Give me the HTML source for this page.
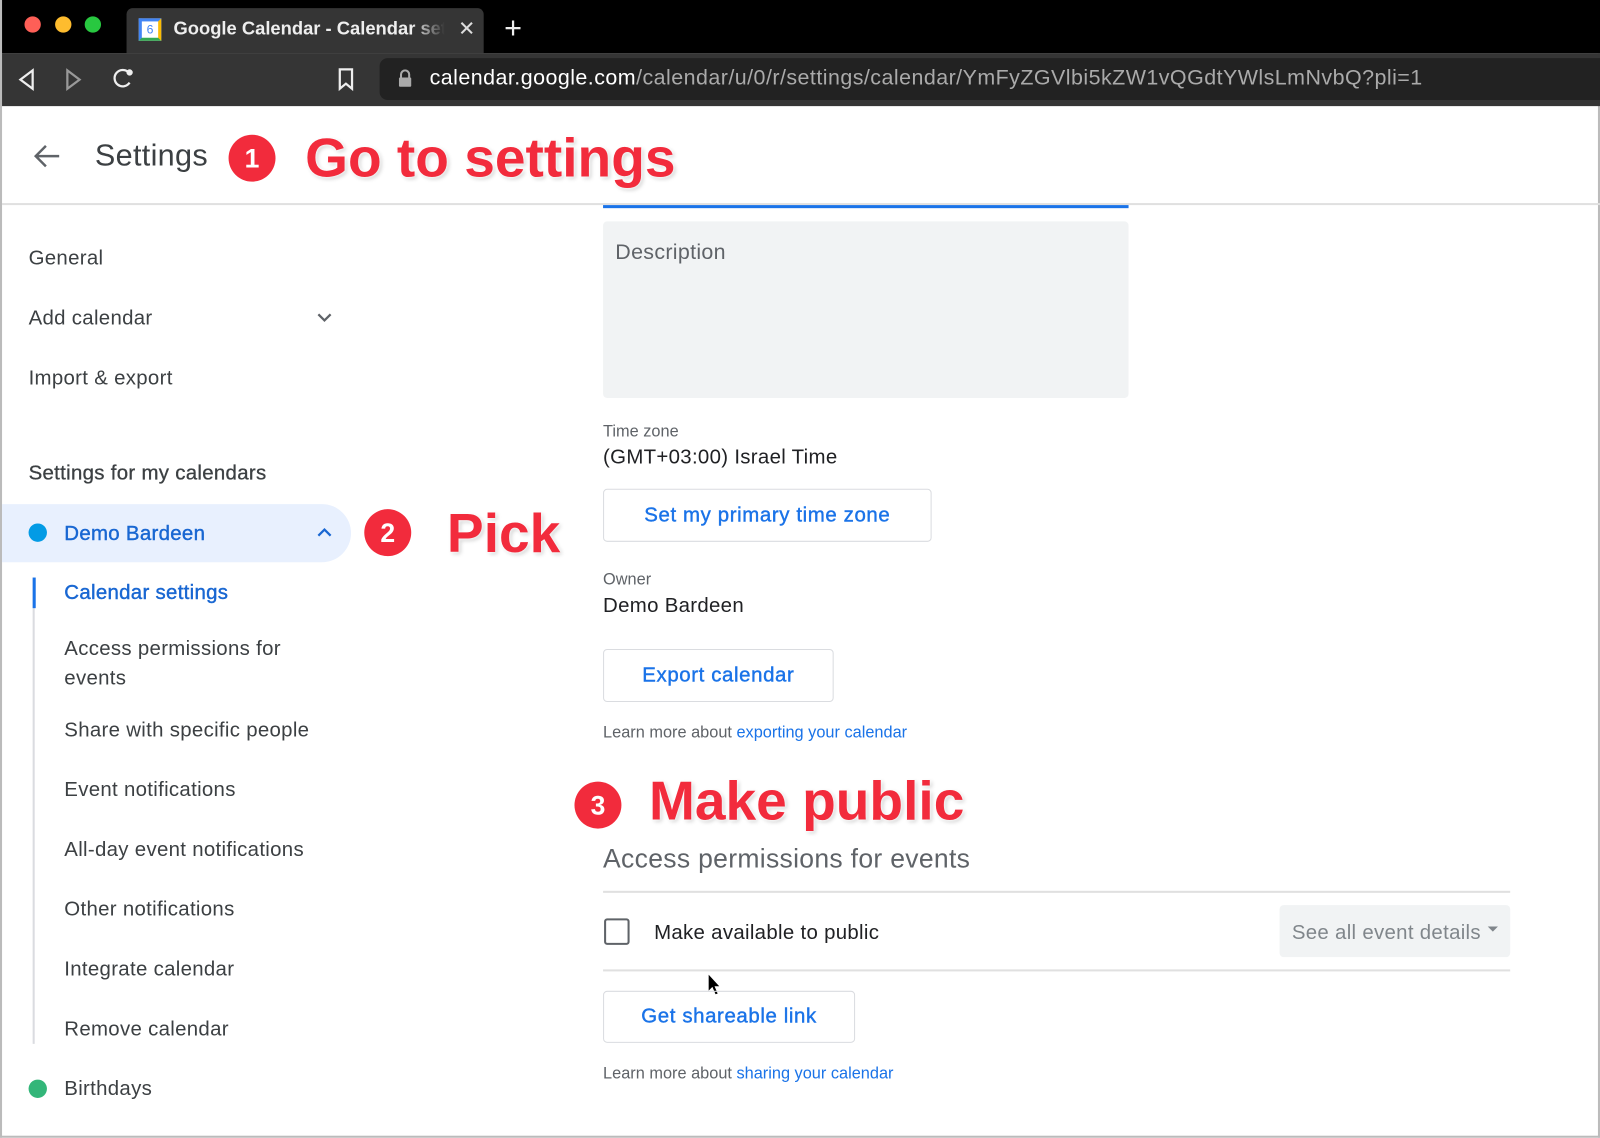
<!DOCTYPE html>
<html><head><meta charset="utf-8"><style>
*{margin:0;padding:0;box-sizing:border-box}
body{width:1600px;height:1138px;overflow:hidden;background:#fff;font-family:"Liberation Sans",Arial,sans-serif}
#w{position:absolute;left:0;top:0;width:1568px;height:1115px;transform:scale(1.0204);transform-origin:0 0;background:#fff;border-left:2px solid #bbb;border-right:2px solid #bbb;border-bottom:2px solid #bbb}
.a{position:absolute;white-space:nowrap}
.sb{font-size:20px;color:#3c4043;letter-spacing:0.3px}
.btn{position:absolute;border:1px solid #dadce0;border-radius:4px;color:#1a73e8;font-size:20px;letter-spacing:0.6px;display:flex;align-items:center;justify-content:center;-webkit-text-stroke:0.4px #1a73e8}
.red{color:#f22b3c;font-weight:bold;text-shadow:0 0 3px #fff,0 0 3px #fff,2px 2px 4px rgba(0,0,0,.2)}
.circ{position:absolute;background:#f22b3c;color:#fff;border-radius:50%;font-weight:bold;display:flex;align-items:center;justify-content:center;font-size:26px}
.sm{font-size:16px;color:#5f6368}
</style></head><body><div id="w">
<div class="a" style="left:0;top:0;width:1568px;height:52px;background:#000"></div>
<div class="a" style="left:22px;top:16px;width:16px;height:16px;border-radius:50%;background:#fe5f57"></div>
<div class="a" style="left:52px;top:16px;width:16px;height:16px;border-radius:50%;background:#febc2e"></div>
<div class="a" style="left:81px;top:16px;width:16px;height:16px;border-radius:50%;background:#28c840"></div>
<div class="a" style="left:122px;top:8px;width:350px;height:44px;background:#353535;border-radius:6px 6px 0 0"></div>
<div class="a" style="left:134px;top:18px;width:22px;height:22px;background:#fff;border:3px solid #4285f4;border-bottom-color:#34a853;border-right-color:#fbbc04;font-size:12px;color:#4285f4;text-align:center;line-height:16px">6</div>
<div class="a" style="left:168px;top:18px;font-size:18px;color:#eee;font-weight:bold;width:266px;overflow:hidden;-webkit-mask-image:linear-gradient(90deg,#000 88%,transparent)">Google Calendar - Calendar settings</div>
<div class="a" style="left:447px;top:16px;font-size:20px;color:#ddd">✕</div>
<div class="a" style="left:492px;top:11px;font-size:30px;color:#eee">+</div>
<div class="a" style="left:0;top:52px;width:1568px;height:52px;background:#353535"></div>
<svg class="a" style="left:14px;top:66px" width="130" height="24" fill="none" stroke="#eee" stroke-width="2.2"><path d="M16 3 L4 12 L16 21 Z"/><path d="M50 3 L62 12 L50 21 Z" stroke="#999"/><path d="M110 5 A8 8 0 1 0 111 15"/><circle cx="111" cy="5" r="2" fill="#eee"/></svg>
<svg class="a" style="left:328px;top:66px" width="18" height="24" fill="none" stroke="#eee" stroke-width="2.2"><path d="M3 2 H15 V21 L9 16 L3 21 Z"/></svg>
<div class="a" style="left:370px;top:57px;width:1198px;height:41px;background:#222;border-radius:8px 0 0 8px"></div>
<svg class="a" style="left:388px;top:68px" width="14" height="18"><path d="M3 8 V5 A4 4 0 0 1 11 5 V8" stroke="#aaa" stroke-width="2" fill="none"/><rect x="1" y="8" width="12" height="9" rx="1" fill="#aaa"/></svg>
<div class="a" style="left:419px;top:65px;font-size:21px;color:#fff;letter-spacing:0.45px">calendar.google.com<span style="color:#aaa">/calendar/u/0/r/settings/calendar/YmFyZGVlbi5kZW1vQGdtYWlsLmNvbQ?pli=1</span></div>

<svg class="a" style="left:30px;top:140px" width="28" height="26" fill="none" stroke="#5f6368" stroke-width="2.4"><path d="M26 13 H4 M13 3 L3 13 L13 23"/></svg>
<div class="a" style="left:91px;top:136px;font-size:30px;color:#3c4043;letter-spacing:0.3px">Settings</div>
<div class="circ" style="left:222px;top:132px;width:46px;height:46px">1</div>
<div class="a red" style="left:297px;top:124px;font-size:54px">Go to settings</div>
<div class="a" style="left:0;top:199px;width:1568px;height:2px;background:#e0e0e0"></div>
<div class="a" style="left:589px;top:201px;width:515px;height:3px;background:#1a73e8"></div>

<div class="a sb" style="left:26px;top:242px">General</div>
<div class="a sb" style="left:26px;top:301px">Add calendar</div>
<svg class="a" style="left:308px;top:305px" width="16" height="12" fill="none" stroke="#5f6368" stroke-width="2.2"><path d="M2 3 L8 9 L14 3"/></svg>
<div class="a sb" style="left:26px;top:360px">Import &amp; export</div>
<div class="a sb" style="left:26px;top:453px;-webkit-text-stroke:0.3px #3c4043">Settings for my calendars</div>
<div class="a" style="left:0;top:494px;width:342px;height:57px;background:#e8f0fe;border-radius:0 29px 29px 0"></div>
<div class="a" style="left:26px;top:513px;width:18px;height:18px;border-radius:50%;background:#039be5"></div>
<div class="a sb" style="left:61px;top:512px;color:#1967d2;-webkit-text-stroke:0.4px #1967d2">Demo Bardeen</div>
<svg class="a" style="left:308px;top:516px" width="16" height="12" fill="none" stroke="#1967d2" stroke-width="2.2"><path d="M2 9 L8 3 L14 9"/></svg>
<div class="a" style="left:30px;top:566px;width:2px;height:457px;background:#dadce0"></div>
<div class="a" style="left:30px;top:566px;width:3px;height:30px;background:#1a73e8"></div>
<div class="a sb" style="left:61px;top:570px;color:#1967d2;-webkit-text-stroke:0.4px #1967d2">Calendar settings</div>
<div class="a sb" style="left:61px;top:622px;line-height:29px">Access permissions for<br>events</div>
<div class="a sb" style="left:61px;top:705px">Share with specific people</div>
<div class="a sb" style="left:61px;top:763px">Event notifications</div>
<div class="a sb" style="left:61px;top:822px">All-day event notifications</div>
<div class="a sb" style="left:61px;top:880px">Other notifications</div>
<div class="a sb" style="left:61px;top:939px">Integrate calendar</div>
<div class="a sb" style="left:61px;top:998px">Remove calendar</div>
<div class="a" style="left:26px;top:1058px;width:18px;height:18px;border-radius:50%;background:#33b679"></div>
<div class="a sb" style="left:61px;top:1056px">Birthdays</div>
<div class="circ" style="left:355px;top:499px;width:46px;height:46px">2</div>
<div class="a red" style="left:436px;top:492px;font-size:54px">Pick</div>

<div class="a" style="left:589px;top:217px;width:515px;height:173px;background:#f1f3f4;border-radius:4px"></div>
<div class="a" style="left:601px;top:236px;font-size:21px;color:#5f6368;letter-spacing:0.3px">Description</div>
<div class="a sm" style="left:589px;top:415px">Time zone</div>
<div class="a sb" style="left:589px;top:437px;color:#202124">(GMT+03:00) Israel Time</div>
<div class="btn" style="left:589px;top:479px;width:322px;height:52px">Set my primary time zone</div>
<div class="a sm" style="left:589px;top:560px">Owner</div>
<div class="a sb" style="left:589px;top:583px;color:#202124">Demo Bardeen</div>
<div class="btn" style="left:589px;top:636px;width:226px;height:52px">Export calendar</div>
<div class="a sm" style="left:589px;top:710px">Learn more about <span style="color:#1a73e8">exporting your calendar</span></div>
<div class="circ" style="left:561px;top:766px;width:46px;height:46px">3</div>
<div class="a red" style="left:634px;top:754px;font-size:54px">Make public</div>
<div class="a" style="left:589px;top:826px;font-size:26px;color:#5f6368;letter-spacing:0.3px">Access permissions for events</div>
<div class="a" style="left:589px;top:873px;width:889px;height:2px;background:#e0e0e0"></div>
<div class="a" style="left:590px;top:900px;width:25px;height:26px;border:2px solid #5f6368;border-radius:3px"></div>
<div class="a sb" style="left:639px;top:903px;color:#202124">Make available to public</div>
<div class="a" style="left:1252px;top:887px;width:226px;height:51px;background:#f1f3f4;border-radius:4px"></div>
<div class="a sb" style="left:1264px;top:903px;color:#80868b">See all event details</div>
<div class="a" style="left:1456px;top:908px;border:5px solid transparent;border-top-color:#80868b"></div>
<div class="a" style="left:589px;top:950px;width:889px;height:2px;background:#e0e0e0"></div>
<svg class="a" style="left:690px;top:952px" width="16" height="26"><path d="M2 2 V20 L6 16 L9 23 L12 22 L9 15 L14 15 Z" fill="#000" stroke="#fff" stroke-width="1"/></svg>
<div class="btn" style="left:589px;top:971px;width:247px;height:51px">Get shareable link</div>
<div class="a sm" style="left:589px;top:1044px">Learn more about <span style="color:#1a73e8">sharing your calendar</span></div>
</div></body></html>
